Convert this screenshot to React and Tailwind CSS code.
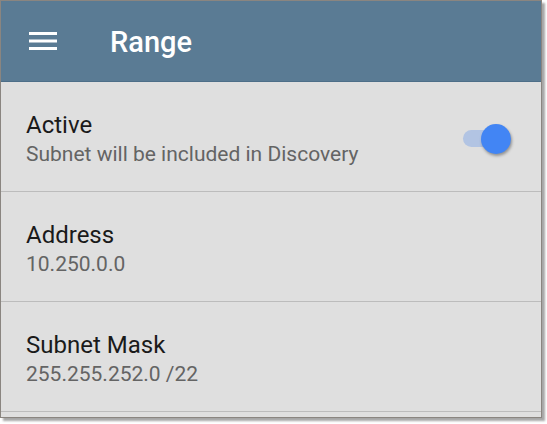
import React, { useState } from 'react';

function Row({ title, subtitle, children }) {
  return (
    <div className="h-[110px] flex items-center justify-between pl-[25px] pr-[30px] border-b border-[#bcbcbc]">
      <div className="flex flex-col pt-[6px]">
        <span className="text-[24px] leading-[29px] text-[#1a1a1a]">{title}</span>
        <span className="text-[21px] leading-[28px] text-[#646464]">{subtitle}</span>
      </div>
      {children}
    </div>
  );
}

export default function App() {
  const [active, setActive] = useState(true);

  return (
    <div className="w-[547px] h-[424px] bg-white" style={{ fontFamily: 'Roboto, "Liberation Sans", sans-serif' }}>
      <div className="w-[542px] h-[418px] border border-[#8a8580] shadow-[3px_3px_2px_rgba(0,0,0,0.35)] bg-[#dfdfdf] overflow-hidden flex flex-col">
        {/* Toolbar */}
        <div className="h-[81px] bg-[#5a7b94] border-b border-[#4d6e88] flex items-center shrink-0">
          <svg width="28" height="18" viewBox="0 0 28 18" className="ml-[28px]">
            <rect x="0" y="0" width="28" height="3" fill="#fff" />
            <rect x="0" y="7.5" width="28" height="3" fill="#fff" />
            <rect x="0" y="15" width="28" height="3" fill="#fff" />
          </svg>
          <span className="ml-[53px] mt-[4px] text-white text-[29px] font-medium">Range</span>
        </div>

        <Row title="Active" subtitle="Subnet will be included in Discovery">
          <button
            onClick={() => setActive(!active)}
            className="relative w-[48px] h-[30px] mt-[4px]"
          >
            <span className="absolute left-0 top-[6px] w-[44px] h-[17px] rounded-full bg-[#b2c4e3]" />
            <span className="absolute right-0 top-0 w-[30px] h-[30px] rounded-full bg-[#4285f4] shadow-[1px_2px_3px_rgba(0,0,0,0.35)]" />
          </button>
        </Row>
        <Row title="Address" subtitle="10.250.0.0" />
        <Row title="Subnet Mask" subtitle="255.255.252.0 /22" />
      </div>
    </div>
  );
}
